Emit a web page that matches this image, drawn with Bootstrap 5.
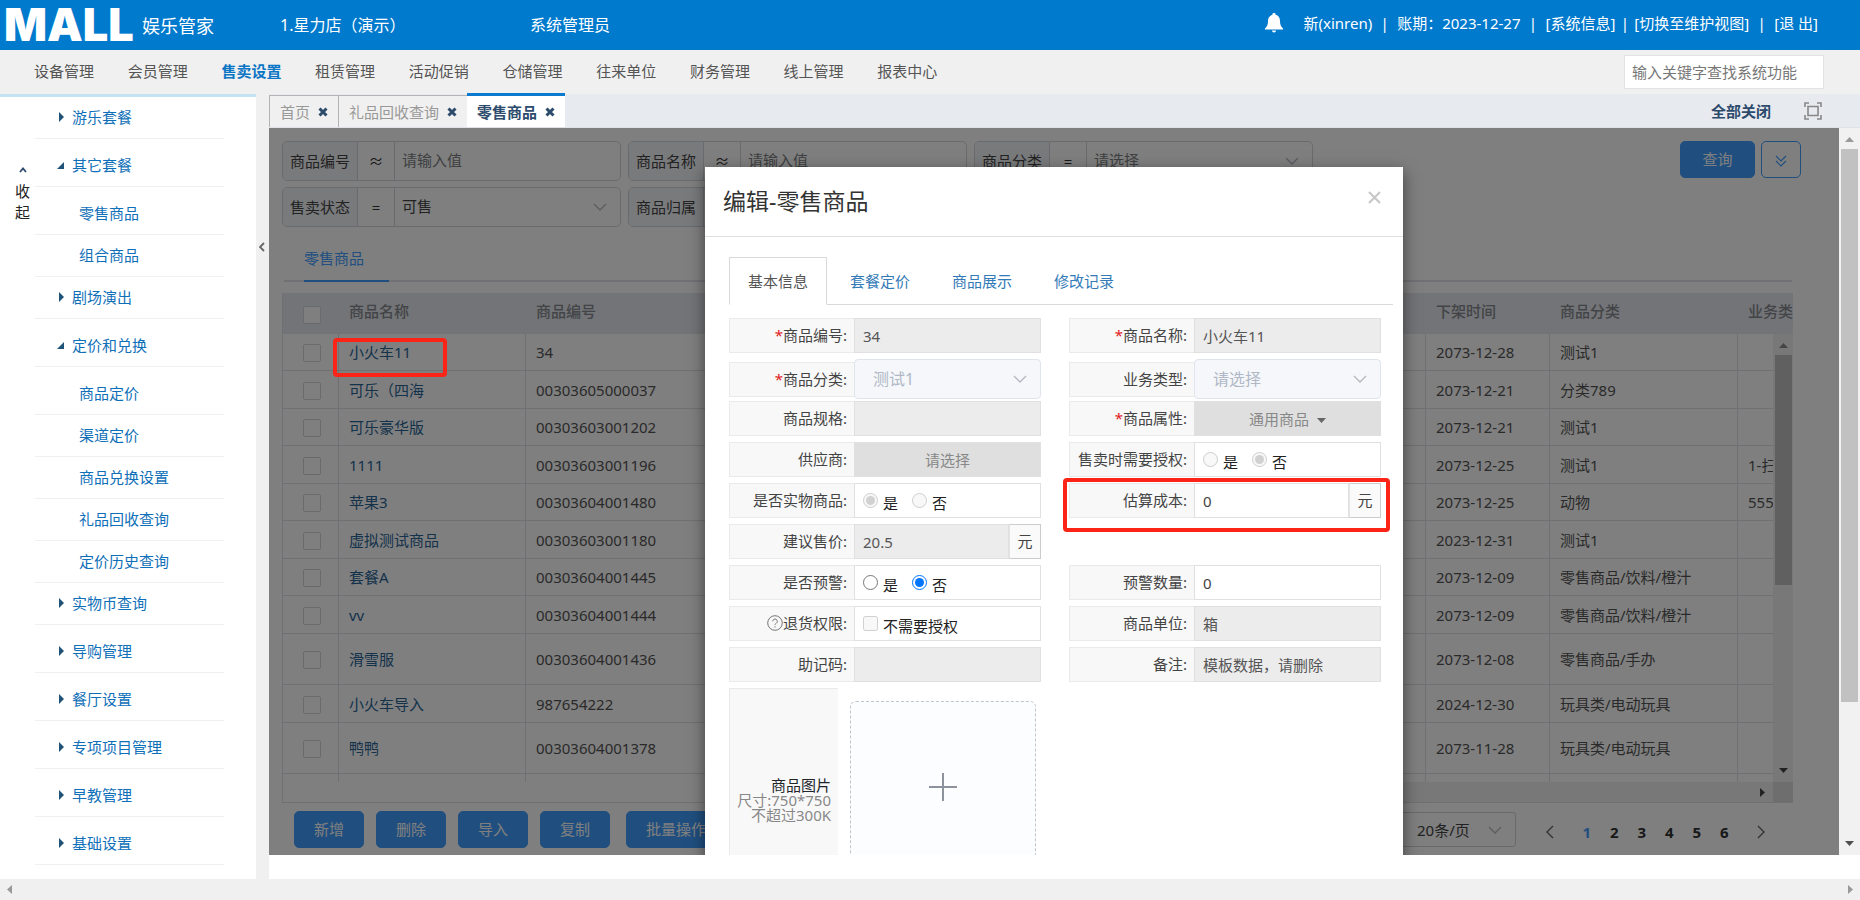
<!DOCTYPE html>
<html lang="zh-CN">
<head>
<meta charset="utf-8">
<meta name="viewport" content="width=device-width, initial-scale=1">
<title>娱乐管家 - 零售商品</title>
<link href="https://cdn.jsdelivr.net/npm/bootstrap@5.3.0/dist/css/bootstrap.min.css" rel="stylesheet">
<style>
body{font-family:"Noto Sans","Noto Sans CJK SC",sans-serif;font-size:15px;line-height:20px;color:#333;background:#fff}
a{text-decoration:none}
input,select,button{font-family:inherit}
/* header */
.topbar{height:50px;background:#007acd;color:#fff}
.topbar a{color:#fff}
.logo{font-family:Inter,sans-serif;font-weight:900;font-size:45px;line-height:46px;width:138px;padding-left:4px}
.product{font-size:18px;width:142px;padding-left:4px;padding-top:2px}
.store{font-size:16px;width:250px}
.role{font-size:16px}
.session{padding-right:42px;padding-bottom:4px}
.sep{width:19px;text-align:center}
.sep.wide{width:25px}
.mainmenu{height:44px;background:#f0f0f0}
.mainmenu ul{display:grid;grid-template-columns:repeat(10,1fr);width:937px;margin:0 0 2px 34px}
.mainmenu a{color:#555}
.mainmenu a.on{color:#0a75c4;font-weight:700}
.finder{width:200px;height:34px;border:1px solid #e3e3e3;padding:0 7px;margin-right:36px;border-radius:0}
.finder::placeholder{color:#777}
/* side menu */
.side{width:256px;border-top:3px solid #c3e3f3}
.collapse-btn{border:0;background:none;width:15px;padding:0;margin:70px 5px 0 15px;line-height:21px;color:#222;align-self:flex-start}
.tree{width:189px}
.tree a{display:flex;align-items:center;height:42px;border-bottom:1px solid #f0f0f0;color:#0f6fb8;padding:0 0 2px 37px}
.tree a.top{margin-bottom:6px;position:relative}
.tree ul a{padding-left:44px}
.tree svg{position:absolute;left:22px;fill:#1f5379}
.splitter{width:13px;background:#f0f0f0;border:0;padding:0 2px 0 0}
/* page tabs */
.pagetabs{height:34px;background:#e7eaee;border-bottom:1px solid #dfe3e8}
.ptab{display:flex;align-items:center;gap:8px;align-self:flex-end;height:32px;padding:0 10px;border:1px solid #b4b4b4;border-width:1px 0 0 1px;background:#f0f0f0;color:#999}
.ptab.on{height:34px;border:0;border-top:3px solid #0a7ace;background:#fff;color:#2d4b6c;font-weight:700}
.ptab svg,.closeall{color:#2d4b6c}
/* inner page */
.viewport{min-height:0;margin-bottom:24px}
.inner{padding:13px 0 0 13px}
.filters{display:grid;grid-template-columns:repeat(3,339px);gap:6px 7px}
.fgroup{height:40px;border:1px solid #d3d6dd;border-radius:5px;display:flex;overflow:hidden}
.fgroup label{width:75px;background:#f3f5f9;padding:9px 0 0 7px;border-right:1px solid #d3d6dd;color:#444}
.fgroup span{width:37px;text-align:center;padding-top:9px;border-right:1px solid #d3d6dd}
.fgroup input,.fgroup select{flex:1;min-width:0;border:0;background:transparent;padding:0 7px 2px;color:#444}
.fgroup input::placeholder,.fgroup select.hint{color:#7c7e83}
.arrow{appearance:none;background:url("data:image/svg+xml,%3Csvg xmlns='http://www.w3.org/2000/svg' width='14' height='8'%3E%3Cpath d='M1 1l6 6 6-6' fill='none' stroke='%23b4b8c0' stroke-width='1.3'/%3E%3C/svg%3E") no-repeat right 13px center !important}
.ebtn{height:37px;min-width:70px;border:1px solid #409eff;border-radius:5px;background:#409eff;color:#fff;padding:0 19px 1px}
.ebtn.find{min-width:75px}
.ebtn.hollow{min-width:0;width:40px;padding:0;background:transparent;color:#409eff}
.subtabs{height:55px;margin:0 47px 11px 2px;padding-left:20px;border-bottom:2px solid #e0e3e9;display:flex;align-items:flex-end}
.subtabs a{color:#409eff;width:85px;height:46px;line-height:44px;border-bottom:2px solid #409eff;margin-bottom:-2px}
.gridbox{margin-right:46px;position:relative;overflow:hidden;border:1px solid #dde1e8;border-width:0 0 1px 1px}
.gridbody{height:489px;overflow:hidden}
.grid{table-layout:fixed;width:100%;border-collapse:separate;border-spacing:0}
.grid th{height:41px;background:#e6e9ef;color:#85888e;padding:0 0 6px 10px;white-space:nowrap;vertical-align:middle;font-weight:500}
.grid td{height:37px;border-bottom:1px solid #dde1e8;padding:0 0 0 10px;white-space:nowrap;color:#555}
.grid tbody tr:nth-child(even) td{height:38px}
.grid tbody tr.tall td{height:51px}
.grid td:not(:last-child){border-right:1px solid #dde1e8}
.grid td:first-child,.grid th:first-child{text-align:center;padding:0 0 0 2px}
.grid a{color:#2a6496}
.grid input{appearance:none;width:18px;height:18px;border:1px solid #d0d4dc;border-radius:2px;background:#fff;display:block;margin:2px auto 0}
.vbar{position:absolute;right:0;top:41px;width:20px;height:448px;background:#f1f1f1;display:flex;flex-direction:column;align-items:center;justify-content:space-between;padding:9px 0}
.vbar i{position:absolute;top:21px;left:2px;right:1px;height:230px;background:#c1c1c1}
.hbar{height:20px;margin-left:50%;background:#f1f1f1;display:flex;justify-content:flex-end;align-items:center}
.hbar b{width:20px;height:20px;background:#dcdcdc;margin-left:8px}
.pager a{flex:1;text-align:center;font-weight:700;color:#303133}
.pager a.on{color:#409eff}
.psize{width:120px;height:35px;border:1px solid #cfd3da;border-radius:3px;padding:0 20px;color:#444}
.redbox{position:absolute;border:4px solid #fb2416;border-radius:4px;pointer-events:none;z-index:3}
.mark-row{left:64px;top:210px;width:114px;height:39px}
.mark-cost{inset:-5px -9px -14px -6px}
/* dialog */
.veil{position:absolute;inset:0;background:rgba(0,0,0,.5);overflow:hidden}
.dlg{width:698px;min-height:900px;margin:39px auto 0;background:#fff;box-shadow:0 5px 15px rgba(0,0,0,.5)}
.dlg header{height:70px;border-bottom:1px solid #e0e0e0;padding:0 22px 0 18px;display:flex;justify-content:space-between;align-items:center}
.dlg h1{font-size:23px;line-height:30px;font-weight:400;margin:0 0 2px}
.dlg .xbtn{border:0;background:none;padding:0;line-height:0;padding-bottom:8px}
.dtabs{display:flex;gap:4px;margin:20px 10px 13px 24px;border-bottom:1px solid #d9d9d9;height:48px}
.dtabs a{width:98px;height:48px;line-height:46px;text-align:center;color:#337ab7;border:1px solid transparent}
.dtabs a.on{color:#555;border-color:#d9d9d9;border-bottom-color:#fff;background:#fff}
.dform{margin:0 22px 0 24px;display:grid;grid-template-columns:repeat(2,minmax(0,1fr));column-gap:28px;row-gap:6px}
.frow{display:flex;height:35px;position:relative}
.frow.sel{height:36px;}
.frow.sel>label{margin-top:3px}
.frow.sel>select{height:40px}
.frow>label,.frow>.lab{width:125px;flex:none;height:35px;background:#f8f8f8;border:1px solid #eaeaea;border-right:0;text-align:right;padding:6px 7px 0 0;color:#444;white-space:nowrap}
.frow em{color:#e02020;font-style:normal}
.fld{flex:1;min-width:0;border:1px solid #e0e0e0;border-radius:0;background:#fff;padding:0 8px;color:#444;height:35px}
.fld:disabled{background:#ececec;color:#555;opacity:1}
select.fld{font-size:16px;border-radius:4px;border-color:#dfe4ed;padding:0 18px}
select.fld:disabled{background-color:#f5f7fa !important;color:#b0b7c6}
button.fld:disabled{background:#dfdfdf;color:#888;text-align:center}
.unit{width:32px;border:1px solid #ccc;border-left:1px solid #e4e4e4;text-align:center;padding-top:6px;background:#fafafa;color:#444}
.opts{display:flex;align-items:center;color:#222}
.opts label{width:49px;display:flex;gap:5px;align-items:flex-start;padding-top:4px;white-space:nowrap}
.opts input{width:15px;height:15px;margin:0;flex:none}
.piclab{width:109px;height:300px;background:#f8f8f8;border:1px solid #eaeaea;border-right:0;text-align:right;padding:89px 7px 0 0;line-height:15px;color:#888}
.upl{width:186px;height:172px;border:1px dashed #c0c4cc;border-radius:6px;background:#fbfdff;margin:13px 0 0 12px}
.track{width:21px;background:#f1f1f1;position:relative;flex:none;margin-bottom:24px;display:flex;flex-direction:column;justify-content:space-between;align-items:center;padding:9px 0}
.track i{position:absolute;top:21px;left:2px;right:2px;height:76%;background:#c1c1c1}
.btrack{height:21px;background:#f0f0f0;padding:0 7px}
</style>
</head>
<body class="vh-100 d-flex flex-column overflow-hidden">

<header class="topbar d-flex align-items-center flex-shrink-0">
  <div class="logo">MALL</div>
  <div class="product">娱乐管家</div>
  <div class="store">1.星力店（演示）</div>
  <div class="role">系统管理员</div>
  <svg class="ms-auto me-3 mb-1" width="18" height="20" viewBox="0 0 18 20" fill="#fff"><path d="M9 0a1.6 1.6 0 0 1 1.6 1.8C13.6 2.5 15 5 15 8c0 4 1 5.500 3 7.500V16.500H0V15.500C2 13.500 3 12 3 8c0-3 1.400-5.500 4.400-6.200A1.600 1.600 0 0 1 9 0zM7 17.500h4a2 2 0 0 1-4 0z"/></svg>
  <div class="session d-flex"><span class="ps-1">新(xinren)</span><span class="sep wide">|</span><span>账期：2023-12-27</span><span class="sep wide">|</span><a href="#">[系统信息]</a><span class="sep">|</span><a href="#">[切换至维护视图]</a><span class="sep wide">|</span><a href="#">[退 出]</a></div>
</header>

<nav class="mainmenu d-flex align-items-center justify-content-between flex-shrink-0">
  <ul class="list-unstyled">
    <li><a href="#">设备管理</a></li><li><a href="#">会员管理</a></li><li><a href="#" class="on">售卖设置</a></li><li><a href="#">租赁管理</a></li><li><a href="#">活动促销</a></li><li><a href="#">仓储管理</a></li><li><a href="#">往来单位</a></li><li><a href="#">财务管理</a></li><li><a href="#">线上管理</a></li><li><a href="#">报表中心</a></li>
  </ul>
  <input class="finder" type="text" aria-label="查找系统功能" placeholder="输入关键字查找系统功能">
</nav>

<div class="d-flex flex-fill" style="min-height:0">
  <aside class="side d-flex flex-shrink-0">
    <button class="collapse-btn" type="button"><svg class="d-block mx-auto mb-2" width="8" height="6" viewBox="0 0 8 6"><path d="M1 5l3-3.500L7 5" fill="none" stroke="#2d4b6c" stroke-width="1.800"/></svg>收起</button>
    <ul class="tree list-unstyled mb-0">
      <li><a href="#" class="top"><svg width="8" height="10"><path d="M2 0l5 5-5 5z"/></svg>游乐套餐</a></li>
      <li><a href="#" class="top"><svg width="8" height="8"><path d="M7 1v7H0z"/></svg>其它套餐</a>
        <ul class="list-unstyled"><li><a href="#">零售商品</a></li><li><a href="#">组合商品</a></li></ul></li>
      <li><a href="#" class="top"><svg width="8" height="10"><path d="M2 0l5 5-5 5z"/></svg>剧场演出</a></li>
      <li><a href="#" class="top"><svg width="8" height="8"><path d="M7 1v7H0z"/></svg>定价和兑换</a>
        <ul class="list-unstyled"><li><a href="#">商品定价</a></li><li><a href="#">渠道定价</a></li><li><a href="#">商品兑换设置</a></li><li><a href="#">礼品回收查询</a></li><li><a href="#">定价历史查询</a></li></ul></li>
      <li><a href="#" class="top"><svg width="8" height="10"><path d="M2 0l5 5-5 5z"/></svg>实物币查询</a></li>
      <li><a href="#" class="top"><svg width="8" height="10"><path d="M2 0l5 5-5 5z"/></svg>导购管理</a></li>
      <li><a href="#" class="top"><svg width="8" height="10"><path d="M2 0l5 5-5 5z"/></svg>餐厅设置</a></li>
      <li><a href="#" class="top"><svg width="8" height="10"><path d="M2 0l5 5-5 5z"/></svg>专项项目管理</a></li>
      <li><a href="#" class="top"><svg width="8" height="10"><path d="M2 0l5 5-5 5z"/></svg>早教管理</a></li>
      <li><a href="#" class="top"><svg width="8" height="10"><path d="M2 0l5 5-5 5z"/></svg>基础设置</a></li>
    </ul>
  </aside>
  <button class="splitter flex-shrink-0 d-flex justify-content-center align-items-start" type="button" aria-label="收起菜单"><svg width="6" height="10" viewBox="0 0 6 10" style="margin-top:148px"><path d="M5 1L1 5l4 4" fill="none" stroke="#666" stroke-width="1.800"/></svg></button>

  <div class="flex-fill d-flex flex-column" style="min-width:0">
    <div class="pagetabs d-flex align-items-center flex-shrink-0">
      <a href="#" class="ptab">首页<svg width="10" height="10" viewBox="0 0 10 10"><path d="M1.500 1.500l7 7M8.500 1.500l-7 7" stroke="currentColor" stroke-width="3"/></svg></a>
      <a href="#" class="ptab">礼品回收查询<svg width="10" height="10" viewBox="0 0 10 10"><path d="M1.500 1.500l7 7M8.500 1.500l-7 7" stroke="currentColor" stroke-width="3"/></svg></a>
      <a href="#" class="ptab on">零售商品<svg width="10" height="10" viewBox="0 0 10 10"><path d="M1.500 1.500l7 7M8.500 1.500l-7 7" stroke="currentColor" stroke-width="3"/></svg></a>
      <a href="#" class="closeall ms-auto fw-bold">全部关闭</a>
      <svg width="18" height="18" viewBox="0 0 18 18" fill="none" stroke="#888" stroke-width="1.600" style="margin:0 38px 0 33px"><path d="M1 5V1h4M13 1h4v4M17 13v4h-4M5 17H1v-4M4 4.500h10v9H4z"/></svg>
    </div>

    <div class="d-flex flex-fill" style="min-height:0">
      <main class="viewport flex-fill position-relative overflow-hidden">
        <div class="inner">
          <div class="d-flex justify-content-between align-items-start">
            <div class="filters">
              <div class="fgroup"><label for="f1">商品编号</label><span>≈</span><input id="f1" placeholder="请输入值"></div>
              <div class="fgroup"><label for="f2">商品名称</label><span>≈</span><input id="f2" placeholder="请输入值"></div>
              <div class="fgroup"><label for="f3">商品分类</label><span>=</span><select id="f3" class="arrow hint"><option>请选择</option></select></div>
              <div class="fgroup"><label for="f4">售卖状态</label><span>=</span><select id="f4" class="arrow"><option>可售</option></select></div>
              <div class="fgroup"><label for="f5">商品归属</label><span>=</span><select id="f5" class="arrow"><option></option></select></div>
            </div>
            <div class="d-flex" style="margin-right:38px;gap:6px">
              <button class="ebtn find" type="button">查询</button>
              <button class="ebtn hollow" type="button" aria-label="展开"><svg width="12" height="12" viewBox="0 0 12 12" fill="none" stroke="currentColor" stroke-width="1.200"><path d="M1 1l5 5 5-5M1 6l5 5 5-5"/></svg></button>
            </div>
          </div>
          <div class="subtabs"><a href="#">零售商品</a></div>

          <div class="gridbox">
            <div class="gridbody">
              <table class="grid">
                <colgroup><col style="width:56px"><col style="width:187px"><col style="width:187px"><col><col style="width:124px"><col style="width:188px"><col style="width:55px"></colgroup>
                <thead><tr><th><input type="checkbox" aria-label="全选"></th><th>商品名称</th><th>商品编号</th><th></th><th>下架时间</th><th>商品分类</th><th>业务类</th></tr></thead>
                <tbody>
                  <tr><td><input type="checkbox" aria-label="选择"></td><td><a href="#">小火车11</a></td><td>34</td><td></td><td>2073-12-28</td><td>测试1</td><td></td></tr>
                  <tr><td><input type="checkbox" aria-label="选择"></td><td><a href="#">可乐（四海</a></td><td>00303605000037</td><td></td><td>2073-12-21</td><td>分类789</td><td></td></tr>
                  <tr><td><input type="checkbox" aria-label="选择"></td><td><a href="#">可乐豪华版</a></td><td>00303603001202</td><td></td><td>2073-12-21</td><td>测试1</td><td></td></tr>
                  <tr><td><input type="checkbox" aria-label="选择"></td><td><a href="#">1111</a></td><td>00303603001196</td><td></td><td>2073-12-25</td><td>测试1</td><td>1-扫</td></tr>
                  <tr><td><input type="checkbox" aria-label="选择"></td><td><a href="#">苹果3</a></td><td>00303604001480</td><td></td><td>2073-12-25</td><td>动物</td><td>555</td></tr>
                  <tr><td><input type="checkbox" aria-label="选择"></td><td><a href="#">虚拟测试商品</a></td><td>00303603001180</td><td></td><td>2023-12-31</td><td>测试1</td><td></td></tr>
                  <tr><td><input type="checkbox" aria-label="选择"></td><td><a href="#">套餐A</a></td><td>00303604001445</td><td></td><td>2073-12-09</td><td>零售商品/饮料/橙汁</td><td></td></tr>
                  <tr><td><input type="checkbox" aria-label="选择"></td><td><a href="#">vv</a></td><td>00303604001444</td><td></td><td>2073-12-09</td><td>零售商品/饮料/橙汁</td><td></td></tr>
                  <tr class="tall"><td><input type="checkbox" aria-label="选择"></td><td><a href="#">滑雪服</a></td><td>00303604001436</td><td></td><td>2073-12-08</td><td>零售商品/手办</td><td></td></tr>
                  <tr><td><input type="checkbox" aria-label="选择"></td><td><a href="#">小火车导入</a></td><td>987654222</td><td></td><td>2024-12-30</td><td>玩具类/电动玩具</td><td></td></tr>
                  <tr class="tall"><td><input type="checkbox" aria-label="选择"></td><td><a href="#">鸭鸭</a></td><td>00303604001378</td><td></td><td>2073-11-28</td><td>玩具类/电动玩具</td><td></td></tr>
                  <tr><td></td><td></td><td></td><td></td><td></td><td></td><td></td></tr>
                </tbody>
              </table>
            </div>
            <div class="vbar"><svg width="9" height="5"><path d="M0 5h9L4.500 0z" fill="#888"/></svg><i></i><svg width="9" height="5"><path d="M0 0h9L4.500 5z" fill="#444"/></svg></div>
            <div class="hbar"><svg width="5" height="9"><path d="M0 0v9l5-4.500z" fill="#444"/></svg><b></b></div>
          </div>

          <div class="d-flex align-items-center pt-2" style="padding-left:12px;gap:12px">
            <button class="ebtn" type="button">新增</button><button class="ebtn" type="button">删除</button><button class="ebtn" type="button">导入</button><button class="ebtn" type="button">复制</button><button class="ebtn ms-1" type="button">批量操作</button>
            <div class="d-flex align-items-center ms-auto" style="margin-right:74px">
              <select class="psize arrow" aria-label="每页条数"><option>20条/页</option></select>
              <svg width="8" height="14" viewBox="0 0 8 14" fill="none" stroke="#666" stroke-width="1.400" style="margin:4px 19px 0 30px"><path d="M7 1L1 7l6 6"/></svg>
              <nav class="pager d-flex pt-1" style="width:165px" aria-label="分页"><a href="#" class="on">1</a><a href="#">2</a><a href="#">3</a><a href="#">4</a><a href="#">5</a><a href="#">6</a></nav>
              <svg width="8" height="14" viewBox="0 0 8 14" fill="none" stroke="#666" stroke-width="1.400" style="margin:4px 0 0 19px"><path d="M1 1l6 6-6 6"/></svg>
            </div>
          </div>
        </div>

        <div class="veil">
          <section class="dlg" role="dialog" aria-labelledby="dt">
            <header><h1 id="dt">编辑-零售商品</h1><button class="xbtn" type="button" aria-label="关闭"><svg width="13" height="13" viewBox="0 0 13 13"><path d="M1 1l11 11M12 1L1 12" stroke="#c8c8c8" stroke-width="2.200"/></svg></button></header>
            <nav class="dtabs"><a href="#" class="on">基本信息</a><a href="#">套餐定价</a><a href="#">商品展示</a><a href="#">修改记录</a></nav>
            <form class="dform">
              <div class="frow"><label for="a1"><em>*</em>商品编号:</label><input id="a1" class="fld" value="34" disabled></div>
              <div class="frow"><label for="b1"><em>*</em>商品名称:</label><input id="b1" class="fld" value="小火车11" disabled></div>
              <div class="frow sel"><label for="a2"><em>*</em>商品分类:</label><select id="a2" class="fld arrow" disabled><option>测试1</option></select></div>
              <div class="frow sel"><label for="b2">业务类型:</label><select id="b2" class="fld arrow" disabled><option>请选择</option></select></div>
              <div class="frow"><label for="a3">商品规格:</label><input id="a3" class="fld" disabled></div>
              <div class="frow"><label for="b3"><em>*</em>商品属性:</label><button id="b3" type="button" class="fld" disabled>通用商品 <svg class="ms-1" width="9" height="5"><path d="M0 0h9L4.500 5z" fill="#666"/></svg></button></div>
              <div class="frow"><label for="a4">供应商:</label><button id="a4" type="button" class="fld" disabled>请选择</button></div>
              <div class="frow"><div class="lab">售卖时需要授权:</div><div class="fld opts"><label><input type="radio" name="auth" disabled>是</label><label><input type="radio" name="auth" disabled checked>否</label></div></div>
              <div class="frow"><div class="lab">是否实物商品:</div><div class="fld opts"><label><input type="radio" name="real" disabled checked>是</label><label><input type="radio" name="real" disabled>否</label></div></div>
              <div class="frow"><label for="b5">估算成本:</label><input id="b5" class="fld" value="0"><span class="unit">元</span><div class="redbox mark-cost"></div></div>
              <div class="frow"><label for="a6">建议售价:</label><input id="a6" class="fld" value="20.5" disabled><span class="unit">元</span></div>
              <div></div>
              <div class="frow"><div class="lab">是否预警:</div><div class="fld opts"><label><input type="radio" name="warn">是</label><label><input type="radio" name="warn" checked>否</label></div></div>
              <div class="frow"><label for="b7">预警数量:</label><input id="b7" class="fld" value="0"></div>
              <div class="frow"><div class="lab"><svg class="mb-1" width="16" height="16" viewBox="0 0 16 16" fill="none" stroke="#777"><circle cx="8" cy="8" r="7.300"/><path d="M5.700 6.300a2.300 2.300 0 1 1 3.500 2C8.300 8.800 8 9.200 8 10M8 11.200v1.300"/></svg>退货权限:</div><div class="fld opts"><label><input type="checkbox" disabled>不需要授权</label></div></div>
              <div class="frow"><label for="b8">商品单位:</label><input id="b8" class="fld" value="箱" disabled></div>
              <div class="frow"><label for="a9">助记码:</label><input id="a9" class="fld" disabled></div>
              <div class="frow"><label for="b9">备注:</label><input id="b9" class="fld" value="模板数据，请删除" disabled></div>
              <div class="d-flex align-items-start"><div class="piclab"><span class="text-dark">商品图片</span><br>尺寸:750*750<br>不超过300K</div><button type="button" class="upl" aria-label="上传图片"><svg width="28" height="28" viewBox="0 0 28 28"><path d="M14 0v28M0 14h28" stroke="#8c939d" stroke-width="2"/></svg></button></div>
            </form>
          </section>
        </div>
        <div class="redbox mark-row"></div>
      </main>
      <div class="track"><svg width="9" height="5"><path d="M0 5h9L4.500 0z" fill="#999"/></svg><i></i><svg width="9" height="5"><path d="M0 0h9L4.500 5z" fill="#505050"/></svg></div>
    </div>
  </div>
</div>
<div class="btrack d-flex justify-content-between align-items-center flex-shrink-0"><svg width="5" height="9"><path d="M5 0v9L0 4.500z" fill="#999"/></svg><svg width="5" height="9"><path d="M0 0v9l5-4.500z" fill="#999"/></svg></div>
<script src="https://cdn.jsdelivr.net/npm/bootstrap@5.3.0/dist/js/bootstrap.bundle.min.js"></script>
</body>
</html>
